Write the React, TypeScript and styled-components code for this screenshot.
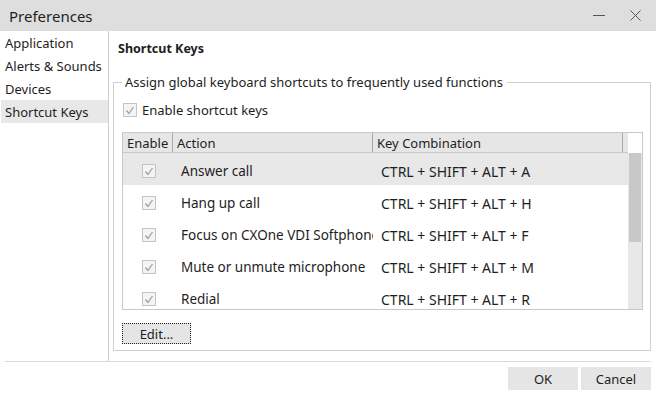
import React from "react";
import styled, { createGlobalStyle } from "styled-components";

const GlobalStyle = createGlobalStyle`
  html, body {
    margin: 0;
    padding: 0;
    background: #ffffff;
  }
  body {
    font-family: "Noto Sans", "Open Sans", Arial, sans-serif;
    font-size: 12px;
    color: #1e1e1e;
  }
`;

const Window = styled.div`
  width: 656px;
  height: 396px;
  display: flex;
  flex-direction: column;
  background: #ffffff;
  overflow: hidden;
`;

const TitleBar = styled.div`
  height: 31px;
  flex: none;
  display: flex;
  align-items: center;
  background: #dedede;
  padding: 0 2px 0 9px;
`;

const Title = styled.div`
  flex: 1;
  font-size: 15px;
  color: #1e1e1e;
`;

const TitleButton = styled.div`
  width: 37px;
  height: 31px;
  display: flex;
  align-items: center;
  justify-content: center;
`;

const Body = styled.div`
  height: 330px;
  flex: none;
  display: flex;
`;

const Sidebar = styled.div`
  width: 108px;
  flex: none;
  border-right: 1px solid #cfcfcf;
  display: flex;
  flex-direction: column;
`;

const NavItem = styled.div<{ $active?: boolean }>`
  height: 23px;
  margin-left: 1px;
  padding-left: 4px;
  display: flex;
  align-items: center;
  font-size: 13px;
  background: ${(p) => (p.$active ? "#e8e8e8" : "transparent")};
`;

const Content = styled.div`
  flex: 1;
  display: flex;
  flex-direction: column;
  padding: 0 5px 0 4px;
`;

const Heading = styled.div`
  height: 32px;
  padding-left: 5px;
  padding-top: 1px;
  display: flex;
  align-items: center;
  font-weight: 700;
  font-size: 12.5px;
`;

const Group = styled.fieldset`
  margin: 10px 0 0 0;
  padding: 0 7px 7px 8px;
  border: 1px solid #cfcfcf;
  height: 277px;
  box-sizing: border-box;
  display: flex;
  flex-direction: column;
  min-width: 0;
`;

const Legend = styled.legend`
  margin-left: 0;
  padding: 0 4px 0 3px;
  font-size: 13px;
  line-height: 17px;
`;

const CheckRow = styled.label`
  height: 16px;
  margin-top: 11px;
  margin-left: 1px;
  display: flex;
  align-items: center;
  gap: 5px;
  font-size: 13px;
`;

const Box = styled.span`
  width: 12px;
  height: 12px;
  flex: none;
  border: 1px solid #c4c4c4;
  background: #f4f4f4;
  display: flex;
  align-items: center;
  justify-content: center;
`;

const Table = styled.div`
  margin-top: 14px;
  height: 178px;
  box-sizing: border-box;
  border: 1px solid #c8c8c8;
  display: flex;
  flex-direction: column;
  overflow: hidden;
`;

const HeaderRow = styled.div`
  height: 20px;
  flex: none;
  display: flex;
`;

const HeaderCells = styled.div`
  width: 505px;
  display: flex;
  background: #e6e6e6;
  border-bottom: 1px solid #c8c8c8;
`;

const HeaderCell = styled.div<{ $w: number }>`
  width: ${(p) => p.$w}px;
  flex: none;
  box-sizing: border-box;
  padding-left: 4px;
  border-right: 1px solid #a8a8a8;
  display: flex;
  align-items: center;
  font-size: 13px;
  white-space: nowrap;
`;

const HeaderFill = styled.div`
  flex: 1;
`;

const ListArea = styled.div`
  flex: 1;
  display: flex;
  min-height: 0;
`;

const Rows = styled.div`
  width: 505px;
  flex: none;
  overflow: hidden;
`;

const Row = styled.div<{ $selected?: boolean }>`
  height: 32px;
  box-sizing: border-box;
  padding-top: 4px;
  display: flex;
  align-items: center;
  background: ${(p) => (p.$selected ? "#e8e8e8" : "#ffffff")};
`;

const CheckCell = styled.div`
  width: 50px;
  flex: none;
  display: flex;
  justify-content: center;
  padding-left: 1px;
  box-sizing: border-box;
`;

const TextCell = styled.div<{ $w: number; $size: number }>`
  width: ${(p) => p.$w}px;
  flex: none;
  box-sizing: border-box;
  padding-left: 8px;
  padding-right: 2px;
  overflow: hidden;
  white-space: nowrap;
  font-size: ${(p) => p.$size}px;
`;

const ScrollTrack = styled.div`
  width: 14px;
  flex: none;
  background: #e8e8e8;
  display: flex;
  flex-direction: column;
`;

const ScrollThumb = styled.div`
  height: 89px;
  margin: 0 1px;
  background: #c8c8c8;
`;

const EditButton = styled.button`
  margin-top: 13px;
  width: 69px;
  height: 21px;
  padding: 0;
  background: #e5e5e5;
  border: 1px dotted #222;
  font-family: inherit;
  font-size: 13px;
  color: #1e1e1e;
  align-self: flex-start;
`;

const Footer = styled.div`
  flex: 1;
  display: flex;
  flex-direction: column;
`;

const Separator = styled.div`
  height: 1px;
  margin: 0 5px;
  background: #dadada;
`;

const ButtonBar = styled.div`
  display: flex;
  justify-content: flex-end;
  gap: 3px;
  padding: 5px 5px 0 0;
`;

const DialogButton = styled.button`
  width: 70px;
  height: 23px;
  padding: 0;
  border: none;
  background: #e5e5e5;
  font-family: inherit;
  font-size: 13px;
  color: #1e1e1e;
`;

const Check = () => (
  <svg width="10" height="9" viewBox="0 0 10 9">
    <polyline points="1.5,4.5 4,7.5 8.5,1" fill="none" stroke="#a0a0a0" strokeWidth="1.3" />
  </svg>
);

const shortcuts = [
  { action: "Answer call", keys: "CTRL + SHIFT + ALT + A" },
  { action: "Hang up call", keys: "CTRL + SHIFT + ALT + H" },
  { action: "Focus on CXOne VDI Softphone", keys: "CTRL + SHIFT + ALT + F" },
  { action: "Mute or unmute microphone", keys: "CTRL + SHIFT + ALT + M" },
  { action: "Redial", keys: "CTRL + SHIFT + ALT + R" },
];

const navItems = ["Application", "Alerts & Sounds", "Devices", "Shortcut Keys"];

export default function App() {
  return (
    <Window>
      <GlobalStyle />
      <TitleBar>
        <Title>Preferences</Title>
        <TitleButton>
          <svg width="12" height="2" viewBox="0 0 12 2">
            <rect x="0" y="0" width="12" height="1" fill="#555" />
          </svg>
        </TitleButton>
        <TitleButton>
          <svg width="11" height="11" viewBox="0 0 11 11">
            <path d="M0.5 0.5 L10.5 10.5 M10.5 0.5 L0.5 10.5" stroke="#555" strokeWidth="1" />
          </svg>
        </TitleButton>
      </TitleBar>
      <Body>
        <Sidebar>
          {navItems.map((n) => (
            <NavItem key={n} $active={n === "Shortcut Keys"}>
              {n}
            </NavItem>
          ))}
        </Sidebar>
        <Content>
          <Heading>Shortcut Keys</Heading>
          <Group>
            <Legend>Assign global keyboard shortcuts to frequently used functions</Legend>
            <CheckRow>
              <Box>
                <Check />
              </Box>
              Enable shortcut keys
            </CheckRow>
            <Table>
              <HeaderRow>
                <HeaderCells>
                  <HeaderCell $w={50}>Enable</HeaderCell>
                  <HeaderCell $w={200}>Action</HeaderCell>
                  <HeaderCell $w={250}>Key Combination</HeaderCell>
                  <HeaderFill />
                </HeaderCells>
              </HeaderRow>
              <ListArea>
                <Rows>
                  {shortcuts.map((s, i) => (
                    <Row key={s.action} $selected={i === 0}>
                      <CheckCell>
                        <Box>
                          <Check />
                        </Box>
                      </CheckCell>
                      <TextCell $w={200} $size={13.5}>{s.action}</TextCell>
                      <TextCell $w={250} $size={14}>{s.keys}</TextCell>
                    </Row>
                  ))}
                </Rows>
                <ScrollTrack>
                  <ScrollThumb />
                </ScrollTrack>
              </ListArea>
            </Table>
            <EditButton>Edit...</EditButton>
          </Group>
        </Content>
      </Body>
      <Footer>
        <Separator />
        <ButtonBar>
          <DialogButton>OK</DialogButton>
          <DialogButton>Cancel</DialogButton>
        </ButtonBar>
      </Footer>
    </Window>
  );
}
